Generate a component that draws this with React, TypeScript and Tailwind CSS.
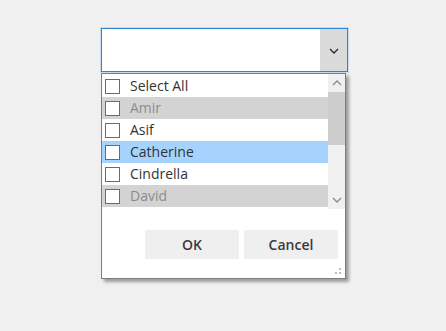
import React from 'react'

const items = [
  { name: 'Select All', state: 'normal' },
  { name: 'Amir', state: 'disabled' },
  { name: 'Asif', state: 'normal' },
  { name: 'Catherine', state: 'selected' },
  { name: 'Cindrella', state: 'normal' },
  { name: 'David', state: 'disabled' },
]

function Chevron({ up, className }: { up?: boolean; className?: string }) {
  return (
    <svg width="10" height="6" viewBox="0 0 10 6" className={className}>
      <path
        d={up ? 'M1 5 L5 1 L9 5' : 'M1 1 L5 5 L9 1'}
        fill="none"
        stroke="currentColor"
        strokeWidth="1.3"
      />
    </svg>
  )
}

export default function App() {
  return (
    <div
      className="w-[446px] h-[331px] bg-[#f0f0f0] pt-[28px] pl-[101px]"
      style={{ fontFamily: '"Open Sans", "Noto Sans", sans-serif' }}
    >
      <div className="w-[247px]">
        {/* combo box */}
        <div className="h-[44px] flex border border-[#2f86d8] bg-white shadow-[0_0_0_1px_rgba(120,180,235,0.35)]">
          <div className="flex-1" />
          <div className="w-[27px] bg-[#dadada] flex items-center justify-center pt-[1px]">
            <Chevron className="text-[#1c2a3a]" />
          </div>
        </div>

        {/* popup */}
        <div className="mt-[1px] w-[245px] h-[206px] border border-[#7d7d7d] bg-white shadow-[3px_3px_3px_rgba(0,0,0,0.35)] flex flex-col relative">
          <div className="flex h-[135px]">
            <div className="flex-1 pt-[1px]">
              {items.map(it => (
                <div
                  key={it.name}
                  className={`h-[22px] flex items-center pl-[3px] ${
                    it.state === 'disabled'
                      ? 'bg-[#d3d3d3] text-[#8c8c8c]'
                      : it.state === 'selected'
                      ? 'bg-[#a6d3fd] text-[#333333]'
                      : 'bg-white text-[#333333]'
                  }`}
                >
                  <div className="w-[15px] h-[15px] border border-[#6b6b6b] bg-white" />
                  <span className="ml-[10px] text-[14px] leading-none">{it.name}</span>
                </div>
              ))}
            </div>
            <div className="w-[17px] bg-[#f0f0f0] flex flex-col items-center">
              <div className="h-[18px] flex items-center justify-center">
                <Chevron up className="text-[#8a8a8a]" />
              </div>
              <div className="w-full h-[53px] bg-[#cdcdcd]" />
              <div className="flex-1" />
              <div className="h-[18px] flex items-center justify-center">
                <Chevron className="text-[#8a8a8a]" />
              </div>
            </div>
          </div>

          <div className="flex justify-end gap-[5px] pr-[7px] mt-[21px]">
            <button className="w-[94px] h-[29px] bg-[#efefef] text-[#3a3a3a] text-[14px] font-semibold">
              OK
            </button>
            <button className="w-[94px] h-[29px] bg-[#efefef] text-[#3a3a3a] text-[14px] font-semibold">
              Cancel
            </button>
          </div>

          <div className="absolute right-[4px] bottom-[4px] grid grid-cols-2 gap-[2px] w-[6px]">
            <div />
            <div className="w-[2px] h-[2px] bg-[#bdbdbd]" />
            <div className="w-[2px] h-[2px] bg-[#bdbdbd]" />
            <div className="w-[2px] h-[2px] bg-[#bdbdbd]" />
          </div>
        </div>
      </div>
    </div>
  )
}
